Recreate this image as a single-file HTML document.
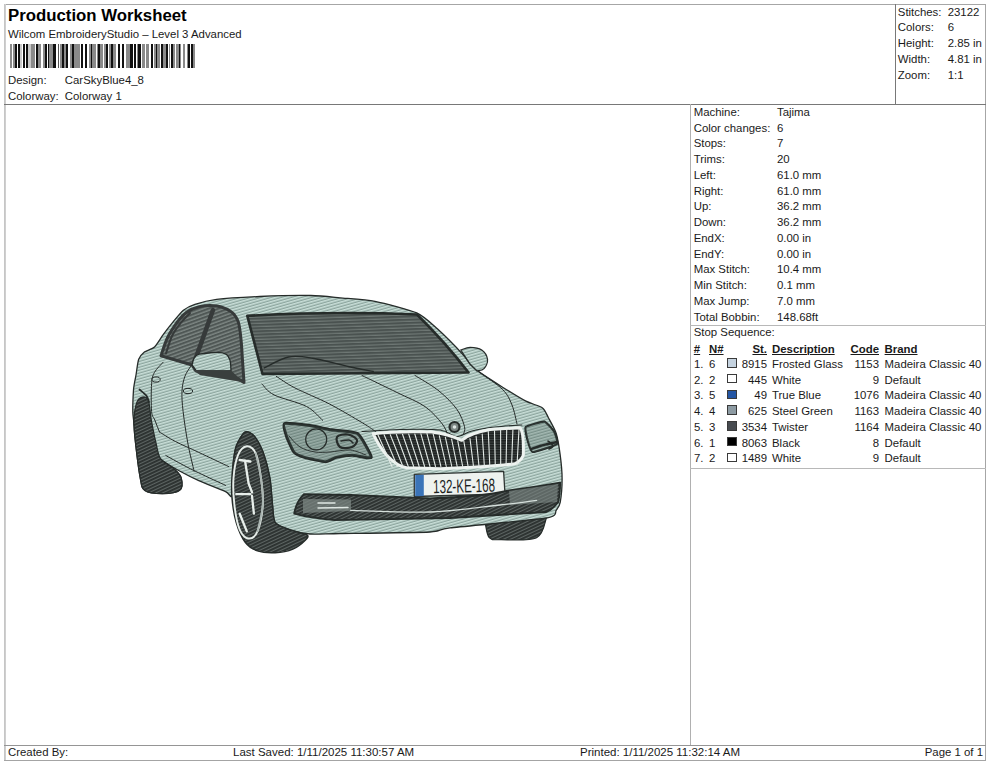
<!DOCTYPE html>
<html><head><meta charset="utf-8"><style>
html,body{margin:0;padding:0;background:#fff;width:990px;height:762px;overflow:hidden;position:relative}
.t{position:absolute;white-space:pre;font-family:"Liberation Sans",sans-serif;font-size:11.4px;line-height:14px;color:#1a1a1a}
.b{font-weight:bold;font-size:16.8px;line-height:22px;color:#000}
.ln{position:absolute}
.sw{position:absolute;width:10px;height:9.5px;box-sizing:border-box;border:1.3px solid #3a3a3a}
</style></head><body>
<div class="ln" style="left:4px;top:4px;width:982px;height:1px;background:#a6a6a6"></div><div class="ln" style="left:4px;top:4px;width:1px;height:757px;background:#c6c6c6"></div><div class="ln" style="left:5px;top:4px;width:1px;height:757px;background:#cfcfcf"></div><div class="ln" style="left:985px;top:4px;width:1px;height:757px;background:#a6a6a6"></div><div class="ln" style="left:4px;top:760px;width:982px;height:1px;background:#a4a4a4"></div><div class="ln" style="left:4px;top:104px;width:982px;height:1px;background:#787878"></div><div class="ln" style="left:895px;top:4px;width:1px;height:101px;background:#787878"></div><div class="ln" style="left:690px;top:104px;width:1px;height:642px;background:#b0b0b0"></div><div class="ln" style="left:690px;top:325px;width:296px;height:1px;background:#b8b8b8"></div><div class="ln" style="left:690px;top:468px;width:296px;height:1px;background:#b8b8b8"></div><div class="ln" style="left:4px;top:745px;width:982px;height:1px;background:#959595"></div>
<svg style="position:absolute;left:0;top:0" width="990" height="762" viewBox="0 0 990 762">
<defs>
<pattern id="sage" patternUnits="userSpaceOnUse" width="8" height="2.8" patternTransform="rotate(-16)">
<rect width="8" height="2.8" fill="#cadfd9"/><rect y="1.5" width="8" height="1.3" fill="#8ca59e"/></pattern>
<pattern id="dark" patternUnits="userSpaceOnUse" width="8" height="3.2" patternTransform="rotate(-2)">
<rect width="8" height="3.2" fill="#4a5250"/><rect y="2" width="8" height="1.2" fill="#6e7774"/></pattern>
<pattern id="dark2" patternUnits="userSpaceOnUse" width="8" height="3.4" patternTransform="rotate(-20)">
<rect width="8" height="3.4" fill="#4f5755"/><rect y="2" width="8" height="1.4" fill="#7d8683"/></pattern>
<pattern id="tire" patternUnits="userSpaceOnUse" width="8" height="3" patternTransform="rotate(-25)">
<rect width="8" height="3" fill="#2c3130"/><rect y="1.9" width="8" height="1.1" fill="#5d6563"/></pattern>
<pattern id="grill" patternUnits="userSpaceOnUse" width="8" height="2.5">
<rect width="8" height="2.5" fill="#1e2221"/><rect y="1.6" width="8" height="0.9" fill="#3e4443"/></pattern>
</defs>

<path d="M140.0,398.0 C142.0,397.1 146.1,395.9 148.0,399.5 C149.9,403.1 149.9,412.1 151.2,419.4 C152.5,426.6 154.4,436.4 156.0,443.0 C157.6,449.6 157.8,454.7 160.7,458.9 C163.6,463.1 169.9,465.1 173.3,468.3 C176.7,471.5 180.1,474.1 181.2,477.8 C182.2,481.5 182.8,487.8 179.6,490.4 C176.4,493.0 168.1,493.6 162.3,493.6 C156.5,493.6 148.6,493.0 144.9,490.4 C141.2,487.8 141.8,485.7 140.2,477.8 C138.6,469.9 136.6,452.7 135.5,443.0 C134.4,433.3 133.8,425.7 133.9,419.4 C134.0,413.1 135.0,408.6 136.0,405.0 C137.0,401.4 138.0,398.9 140.0,398.0Z" fill="url(#tire)" stroke="#262c2a" stroke-width="1.2" stroke-linejoin="round" stroke-linecap="round" />
<path d="M485.4,524.0 C486.0,526.3 486.7,535.1 489.3,537.7 C491.9,540.3 493.3,539.7 501.2,539.7 C509.1,539.7 529.1,541.3 536.6,537.7 C544.1,534.1 544.8,521.3 546.4,518.0 L 520,520 Z" fill="url(#tire)" stroke="#262c2a" stroke-width="1.2" stroke-linejoin="round" stroke-linecap="round" />
<path d="M231.8,495.9 C231.0,498.5 229.4,493.5 225.6,491.7 C221.8,489.9 204.1,483.1 198.8,480.7 C193.5,478.3 184.0,473.5 180.0,471.3 C176.0,469.1 167.5,464.1 164.2,461.8 C160.9,459.5 155.1,454.5 152.0,452.0 C148.9,449.5 140.2,444.3 138.0,440.0 C135.8,435.7 133.5,420.8 133.0,415.0 C132.5,409.2 133.2,394.7 133.5,390.0 C133.8,385.3 135.4,378.6 136.0,375.0 C136.6,371.4 137.7,362.0 138.7,359.3 C139.7,356.6 142.6,353.4 144.4,352.0 C146.2,350.6 152.3,349.0 154.5,347.0 C156.7,345.0 161.0,337.7 163.2,334.7 C165.4,331.7 170.9,324.6 173.3,321.7 C175.7,318.8 180.9,312.2 183.4,310.2 C185.9,308.2 191.0,305.7 194.9,304.4 C198.8,303.1 209.0,300.3 216.6,299.4 C224.2,298.5 248.9,297.0 259.9,296.5 C270.9,296.0 301.6,295.3 310.9,295.5 C320.2,295.7 332.5,297.1 340.0,297.8 C347.5,298.5 366.0,299.5 374.9,301.3 C383.8,303.1 409.4,309.7 416.7,312.9 C424.0,316.1 432.2,324.2 437.6,329.1 C443.0,334.0 459.3,350.6 463.1,354.7 C466.9,358.8 468.2,362.0 470.1,364.0 C472.0,366.0 475.6,369.4 479.4,372.1 C483.2,374.8 497.2,383.8 502.6,387.2 C508.0,390.6 521.2,398.8 525.9,401.2 C530.6,403.6 539.9,406.0 542.5,407.9 C545.1,409.8 546.8,414.7 548.4,417.7 C550.0,420.7 554.8,429.0 556.2,433.4 C557.6,437.8 559.5,449.8 560.2,455.1 C560.9,460.4 562.1,473.2 562.1,478.7 C562.1,484.2 560.9,498.6 560.2,502.3 C559.5,506.0 557.8,508.4 556.2,510.2 C554.6,512.0 558.8,515.9 546.4,518.0 C534.0,520.1 463.6,526.3 450.0,527.9 C436.4,529.5 442.8,531.3 430.0,532.0 C417.2,532.7 354.0,533.3 340.0,533.5 C326.0,533.7 315.9,534.5 310.0,534.0 C304.1,533.5 293.5,530.9 289.4,529.6 C285.3,528.3 277.2,525.4 275.2,522.5 C273.2,519.6 273.1,510.0 272.5,504.8 C271.9,499.6 271.0,484.4 269.9,478.2 C268.8,472.0 264.7,456.6 262.8,451.6 C260.9,446.6 256.0,437.9 253.9,435.6 C251.8,433.3 247.1,430.9 245.0,432.1 C242.9,433.3 237.6,442.0 236.2,446.3 C234.8,450.6 233.1,463.5 232.6,469.3 C232.1,475.1 232.6,493.3 231.8,495.9Z" fill="url(#sage)" stroke="#262c2a" stroke-width="1.3" stroke-linejoin="round" stroke-linecap="round" />
<path d="M140.0,398.0 C142.0,397.1 146.1,395.9 148.0,399.5 C149.9,403.1 149.9,412.1 151.2,419.4 C152.5,426.6 154.4,436.4 156.0,443.0 C157.6,449.6 157.8,454.7 160.7,458.9 C163.6,463.1 169.9,465.1 173.3,468.3 C176.7,471.5 180.1,474.1 181.2,477.8 C182.2,481.5 182.8,487.8 179.6,490.4 C176.4,493.0 168.1,493.6 162.3,493.6 C156.5,493.6 148.6,493.0 144.9,490.4 C141.2,487.8 141.8,485.7 140.2,477.8 C138.6,469.9 136.6,452.7 135.5,443.0 C134.4,433.3 133.8,425.7 133.9,419.4 C134.0,413.1 135.0,408.6 136.0,405.0 C137.0,401.4 138.0,398.9 140.0,398.0Z" fill="url(#tire)" stroke="#262c2a" stroke-width="1.2" stroke-linejoin="round" stroke-linecap="round" />
<path d="M139.5,389.5 C140.7,390.6 144.9,393.7 146.5,395.8 C148.1,397.9 148.6,401.0 149.0,402.0" fill="none" stroke="#262c2a" stroke-width="1.8" stroke-linejoin="round" stroke-linecap="round" />
<path d="M247.3,315.8 Q337,311 417,314.5 Q445,342 468.5,372.5 L262.5,374 Q255,345 247.3,315.8Z" fill="url(#dark)" stroke="#262c2a" stroke-width="2.6" stroke-linejoin="round" stroke-linecap="round" />
<path d="M264.2,367.9 C268.2,366.1 280.4,358.6 288.5,357.0 C296.6,355.4 302.6,356.6 312.7,358.2 C322.8,359.8 339.0,364.5 349.1,366.7 C359.2,368.9 369.3,370.7 373.3,371.5" fill="none" stroke="#262c2a" stroke-width="1.4" stroke-linejoin="round" stroke-linecap="round" />
<path d="M161.0,355.7 C162.1,352.7 164.7,343.3 167.5,337.6 C170.3,331.9 174.5,325.9 177.6,321.7 C180.7,317.5 182.7,314.9 186.3,312.4 C189.9,309.9 194.2,307.7 199.3,306.6 C204.4,305.5 211.3,305.1 216.6,305.9 C221.9,306.7 227.4,309.0 231.0,311.6 C234.6,314.2 236.5,316.9 238.2,321.7 C239.9,326.5 240.4,333.8 241.1,340.5 C241.8,347.2 242.1,355.2 242.6,362.2 C243.1,369.2 243.8,379.0 244.0,382.4 L231,375.1 L196,371 L192,365 Z" fill="url(#dark2)" stroke="#363a3a" stroke-width="3.0" stroke-linejoin="round" stroke-linecap="round" />
<path d="M213,310 L194,363" fill="none" stroke="#363a3a" stroke-width="4.5" stroke-linejoin="round" stroke-linecap="round" />
<path d="M166.0,353.5 C167.0,350.6 169.6,341.1 172.0,336.0 C174.4,330.9 177.5,327.0 180.5,323.2 C183.5,319.4 188.4,314.7 190.0,313.0" fill="none" stroke="#363a3a" stroke-width="2.0" stroke-linejoin="round" stroke-linecap="round" />
<path d="M193.5,359.3 C194.5,358.4 194.5,355.3 199.3,354.2 C204.1,353.1 217.4,351.9 222.4,352.8 C227.4,353.7 228.2,356.3 229.6,359.3 C231.0,362.3 230.8,368.9 231.0,370.8 L196.4,370.8 L192,365 Z" fill="url(#sage)" stroke="#262c2a" stroke-width="1.3" stroke-linejoin="round" stroke-linecap="round" />
<path d="M193.0,370.0 L231.0,370.5 L244.0,382.4 L236.0,381.0 L200.0,375.0Z" fill="#3a3f3e" stroke="none" stroke-linejoin="round" stroke-linecap="round" />
<path d="M460.8,350.0 C462.4,349.6 466.6,347.3 470.1,347.3 C473.6,347.3 478.8,348.0 481.7,350.0 C484.6,352.0 487.1,356.2 487.5,359.3 C487.9,362.4 485.8,366.7 484.0,368.6 C482.2,370.6 478.2,370.6 477.0,371.0 L470,364 Z" fill="url(#sage)" stroke="#262c2a" stroke-width="1.3" stroke-linejoin="round" stroke-linecap="round" />
<path d="M276.3,376.3 C279.4,378.2 286.0,383.3 294.9,387.9 C303.8,392.5 318.5,398.3 329.7,404.1 C340.9,409.9 354.4,418.1 362.2,422.7 C369.9,427.3 373.9,430.4 376.2,432.0" fill="none" stroke="#262c2a" stroke-width="1.0" stroke-linejoin="round" stroke-linecap="round" />
<path d="M262.0,384.0 C264.0,385.8 266.6,391.1 274.0,394.9 C281.4,398.6 298.4,402.2 306.5,406.5 C314.6,410.8 320.0,418.1 322.7,420.4" fill="none" stroke="#262c2a" stroke-width="1.0" stroke-linejoin="round" stroke-linecap="round" />
<path d="M362.0,375.5 C367.8,378.3 386.5,387.3 397.0,392.5 C407.5,397.7 417.5,401.4 425.0,406.6 C432.5,411.8 438.2,418.9 442.0,423.6 C445.8,428.3 447.0,433.1 448.0,435.0" fill="none" stroke="#262c2a" stroke-width="1.0" stroke-linejoin="round" stroke-linecap="round" />
<path d="M415.0,375.5 C419.0,378.1 432.0,385.3 439.0,391.0 C446.0,396.7 452.8,403.6 457.0,409.5 C461.2,415.4 463.4,422.4 464.5,426.5 C465.6,430.6 463.7,432.8 463.5,434.0" fill="none" stroke="#262c2a" stroke-width="1.0" stroke-linejoin="round" stroke-linecap="round" />
<path d="M479.4,372.1 C483.3,375.0 497.2,384.0 502.6,389.5 C508.0,395.0 509.6,399.2 512.0,405.0 C514.4,410.8 516.2,420.8 517.0,424.0" fill="none" stroke="#262c2a" stroke-width="1.0" stroke-linejoin="round" stroke-linecap="round" />
<path d="M163.2,362.2 C161.8,363.9 156.4,368.7 154.5,372.3 C152.6,375.9 152.1,377.3 151.6,383.8 C151.1,390.3 151.1,405.5 151.6,411.5 C152.1,417.5 153.5,416.6 154.8,420.0 C156.1,423.4 158.7,430.0 159.5,432.0" fill="none" stroke="#262c2a" stroke-width="1.0" stroke-linejoin="round" stroke-linecap="round" />
<path d="M190.6,366.5 C189.6,368.2 186.2,372.5 184.8,376.6 C183.4,380.7 182.3,385.2 182.0,391.0 C181.7,396.8 182.1,402.8 183.1,411.5 C184.1,420.2 186.0,433.0 187.8,443.0 C189.6,453.0 193.1,466.6 194.1,471.3" fill="none" stroke="#262c2a" stroke-width="1.0" stroke-linejoin="round" stroke-linecap="round" />
<path d="M159.5,432.0 C162.1,433.6 168.6,438.0 175.2,441.4 C181.8,444.8 189.9,448.2 198.8,452.4 C207.7,456.6 223.7,464.2 228.7,466.6" fill="none" stroke="#262c2a" stroke-width="1.0" stroke-linejoin="round" stroke-linecap="round" />
<path d="M165.8,455.5 C168.7,457.1 177.6,462.1 183.1,465.0 C188.6,467.9 191.7,469.5 198.8,472.9 C205.9,476.3 221.1,483.3 225.6,485.4" fill="none" stroke="#262c2a" stroke-width="1.0" stroke-linejoin="round" stroke-linecap="round" />
<ellipse cx="156" cy="379.5" rx="4.2" ry="2.6" fill="none" stroke="#262c2a" stroke-width="1"/>
<ellipse cx="188" cy="391" rx="4.6" ry="2.6" fill="none" stroke="#262c2a" stroke-width="1"/>
<path d="M284.4,423.5 C286.3,422.6 305.9,425.1 309.8,425.6 C313.7,426.1 327.0,429.1 331.0,429.8 C335.0,430.5 354.1,431.3 357.5,433.6 C360.9,435.9 371.7,455.6 371.3,457.4 C370.9,459.2 355.1,455.3 352.2,455.3 C349.3,455.3 338.5,456.9 336.3,457.4 C334.1,457.9 328.3,461.7 325.7,461.7 C323.1,461.7 307.1,458.2 304.5,457.4 C301.9,456.6 295.4,453.9 293.9,452.1 C292.4,450.3 287.3,438.6 286.5,436.2 C285.7,433.8 282.5,424.4 284.4,423.5Z" fill="url(#sage)" stroke="#262c2a" stroke-width="3.0" stroke-linejoin="round" stroke-linecap="round" />
<path d="M284.4,423.5 C286.3,422.6 305.9,425.1 309.8,425.6 C313.7,426.1 327.0,429.1 331.0,429.8 C335.0,430.5 354.1,431.3 357.5,433.6 C360.9,435.9 371.7,455.6 371.3,457.4 C370.9,459.2 355.1,455.3 352.2,455.3 C349.3,455.3 338.5,456.9 336.3,457.4 C334.1,457.9 328.3,461.7 325.7,461.7 C323.1,461.7 307.1,458.2 304.5,457.4 C301.9,456.6 295.4,453.9 293.9,452.1 C292.4,450.3 287.3,438.6 286.5,436.2 C285.7,433.8 282.5,424.4 284.4,423.5Z" fill="#3f504a" stroke="none" stroke-linejoin="round" stroke-linecap="round" fill-opacity="0.35"/>
<path d="M289.0,436.0 C290.8,437.8 295.7,444.3 300.0,447.0 C304.3,449.7 310.0,451.2 315.0,452.0 C320.0,452.8 324.2,452.3 330.0,452.0 C335.8,451.7 344.0,449.5 350.0,450.0 C356.0,450.5 363.3,454.2 366.0,455.0" fill="none" stroke="#262c2a" stroke-width="0.9" stroke-linejoin="round" stroke-linecap="round" />
<circle cx="316.2" cy="439.4" r="10.5" fill="none" stroke="#262c2a" stroke-width="1.2"/>
<path d="M337.0,437.0 C338.3,434.9 344.7,434.0 348.0,434.5 C351.3,435.0 356.3,437.9 357.0,440.0 C357.7,442.1 354.8,445.8 352.0,447.0 C349.2,448.2 342.5,448.7 340.0,447.0 C337.5,445.3 335.7,439.1 337.0,437.0Z" fill="none" stroke="#262c2a" stroke-width="2.2" stroke-linejoin="round" stroke-linecap="round" />
<path d="M341.0,441.0 C342.3,440.8 347.0,439.7 349.0,440.0 C351.0,440.3 352.3,442.5 353.0,443.0" fill="none" stroke="#262c2a" stroke-width="1.6" stroke-linejoin="round" stroke-linecap="round" />
<path d="M525.7,427.0 C526.8,425.8 542.5,421.3 544.4,421.6 C546.3,421.9 553.5,430.5 554.3,432.0 C555.1,433.5 558.4,442.7 557.0,444.0 C555.6,445.3 534.6,452.3 532.6,452.0 C530.6,451.7 528.0,441.7 527.5,440.0 C527.0,438.3 524.6,428.2 525.7,427.0Z" fill="url(#sage)" stroke="#262c2a" stroke-width="2.2" stroke-linejoin="round" stroke-linecap="round" />
<path d="M525.7,427.0 C526.8,425.8 542.5,421.3 544.4,421.6 C546.3,421.9 553.5,430.5 554.3,432.0 C555.1,433.5 558.4,442.7 557.0,444.0 C555.6,445.3 534.6,452.3 532.6,452.0 C530.6,451.7 528.0,441.7 527.5,440.0 C527.0,438.3 524.6,428.2 525.7,427.0Z" fill="#4d5f58" stroke="none" stroke-linejoin="round" stroke-linecap="round" fill-opacity="0.3"/>
<path d="M531.0,449.0 C532.5,448.5 537.2,446.8 540.0,446.0 C542.8,445.2 545.2,444.7 548.0,444.0 C550.8,443.3 555.5,442.3 557.0,442.0" fill="none" stroke="#262c2a" stroke-width="2.4" stroke-linejoin="round" stroke-linecap="round" />
<path d="M548.0,441.0 C548.8,441.8 552.8,444.7 553.0,446.0 C553.2,447.3 549.7,448.5 549.0,449.0" fill="none" stroke="#262c2a" stroke-width="1.6" stroke-linejoin="round" stroke-linecap="round" />
<circle cx="454.5" cy="427" r="5" fill="#7d8784" stroke="#262c2a" stroke-width="2.2"/><circle cx="454.5" cy="427" r="1.8" fill="#dfe6e3"/>
<path d="M362.0,431.5 C368.3,431.2 387.0,429.8 400.0,429.5 C413.0,429.2 430.7,428.8 440.0,430.0 C449.3,431.2 450.7,436.3 456.0,436.5 C461.3,436.7 465.5,432.6 472.0,431.0 C478.5,429.4 486.7,428.0 495.0,427.0 C503.3,426.0 517.5,425.3 522.0,425.0" fill="none" stroke="#262c2a" stroke-width="1.1" stroke-linejoin="round" stroke-linecap="round" />
<path d="M373.3,433.7 Q398,431 431.7,432 Q448,434 461.7,440.3 Q470,433 490,429.5 L520,427.8 Q524,432 523.3,455.3 Q521,461 515,463.7 Q490,467 440,468.7 L406.7,467.8 Q398,467 386.7,455.3 Q378,445 373.3,433.7Z" fill="url(#grill)" stroke="#eef3f0" stroke-width="3.0" stroke-linejoin="round" stroke-linecap="round" />
<path d="M378.0,435.0 L392.0,466.5 M384.1,434.8 L397.4,466.5 M390.3,434.7 L402.9,466.5 M396.4,434.5 L408.3,466.5 M402.5,434.3 L413.7,466.5 M408.7,434.1 L419.2,466.5 M414.8,434.0 L424.6,466.5 M420.9,433.8 L430.0,466.5 M427.0,433.6 L435.5,466.5 M433.2,434.1 L440.9,466.5 M439.3,435.7 L446.3,466.5 M445.4,437.4 L451.8,466.5 M451.6,439.1 L457.2,466.5 M457.7,440.7 L462.7,466.5 M463.8,441.0 L468.1,466.5 M470.0,438.6 L473.5,466.5 M476.1,436.3 L479.0,466.5 M482.2,434.0 L484.4,466.5 M488.3,431.6 L489.8,466.5 M494.5,430.7 L495.3,466.5 M500.6,430.4 L500.7,465.0 M506.7,430.1 L506.1,465.0 M512.9,429.7 L511.6,465.0 M519.0,429.4 L517.0,465.0" fill="none" stroke="#e3eae6" stroke-width="1.1" stroke-linejoin="round" stroke-linecap="round" />
<path d="M414.3,474.4 L503.6,471.3 L505.0,494.0 L414.3,496.5Z" fill="#eef2ef" stroke="#2f3533" stroke-width="1.3" stroke-linejoin="round" stroke-linecap="round" />
<path d="M415.2,475.0 L423.8,474.7 L423.8,496.0 L415.2,496.2Z" fill="#3a74b8" stroke="none" stroke-linejoin="round" stroke-linecap="round" />
<text x="433" y="492.5" font-family="Liberation Sans" font-size="19" fill="#1b1f1e" transform="rotate(-1.6 464 485)" textLength="62" lengthAdjust="spacingAndGlyphs">132-KE-168</text>
<path d="M294.2,513.6 Q296,502 303.9,494.2 L350.8,495 L430,498.3 Q480,497 509,490.5 Q540,486 560.2,482.6 Q560,495 558.2,502.3 Q552,510 546.4,512 L450,518 L334.6,520.1 Q310,518 294.2,513.6Z" fill="url(#tire)" stroke="#262c2a" stroke-width="1.8" stroke-linejoin="round" stroke-linecap="round" />
<path d="M303.0,499.0 L351.0,499.5 L351.0,511.0 L303.0,513.0Z" fill="#7b8582" stroke="none" stroke-linejoin="round" stroke-linecap="round" opacity="0.75"/>
<path d="M318,503 L335,503 M318,508 L348,507.5" fill="none" stroke="#dfe7e3" stroke-width="1.4" stroke-linejoin="round" stroke-linecap="round" />
<path d="M509.0,491.0 L558.0,484.0 L557.0,502.0 L510.0,505.0Z" fill="#7f8a87" stroke="none" stroke-linejoin="round" stroke-linecap="round" opacity="0.6"/>
<path d="M350.8,510.4 C364.0,510.7 405.1,512.9 430.0,512.0 C454.9,511.1 482.2,506.9 500.0,505.0 C517.8,503.1 530.5,501.1 536.6,500.3" fill="none" stroke="#d5dfdb" stroke-width="1.3" stroke-linejoin="round" stroke-linecap="round" />
<path d="M245.0,432.1 C247.4,430.7 251.5,433.0 253.9,435.6 C256.3,438.2 260.7,445.9 262.8,451.6 C264.9,457.3 268.6,471.1 269.9,478.2 C271.2,485.3 271.8,498.9 272.5,504.8 C273.2,510.7 272.9,519.2 275.2,522.5 C277.5,525.8 285.1,527.9 289.4,529.6 C293.7,531.3 305.0,533.5 307.1,534.9 C309.2,536.3 307.2,538.3 305.3,540.2 C303.4,542.1 296.9,547.4 292.9,549.1 C288.9,550.8 279.9,552.5 275.2,552.7 C270.5,552.9 261.5,552.3 257.5,550.9 C253.5,549.5 247.8,545.8 245.0,542.0 C242.2,538.2 238.0,528.6 236.2,522.5 C234.4,516.4 232.3,503.0 231.8,495.9 C231.3,488.8 232.0,475.9 232.6,469.3 C233.2,462.7 234.5,451.3 236.2,446.3 C237.9,441.3 242.6,433.5 245.0,432.1Z" fill="url(#tire)" stroke="#262c2a" stroke-width="1.4" stroke-linejoin="round" stroke-linecap="round" />
<path d="M246.8,446.3 C249.8,446.0 253.3,448.1 255.7,453.4 C258.1,458.7 259.8,469.6 261.0,478.2 C262.2,486.8 263.4,495.9 262.8,504.8 C262.2,513.7 259.9,525.8 257.5,531.4 C255.1,537.0 251.6,538.8 248.6,538.5 C245.6,538.2 242.1,535.2 239.7,529.6 C237.3,524.0 235.4,513.4 234.4,504.8 C233.4,496.2 232.9,486.5 233.5,478.2 C234.1,469.9 235.8,460.4 238.0,455.1 C240.2,449.8 243.9,446.6 246.8,446.3Z" fill="url(#tire)" stroke="#e6ede9" stroke-width="1.9" stroke-linejoin="round" stroke-linecap="round" />
<path d="M239.7,460 L250.4,461.5 M245,460.5 L248.6,483.5 L252.1,492.4 M236.2,494.1 L250.4,494.1 M252,496 L253.9,513.7 M239.7,513.7 L246.8,531.4" fill="none" stroke="#e8efeb" stroke-width="2.3" stroke-linejoin="round" stroke-linecap="round" />
<path d="M255.7,453.4 C256.6,457.5 259.8,469.6 261.0,478.2 C262.2,486.8 263.4,495.9 262.8,504.8 C262.2,513.7 258.4,527.0 257.5,531.4" fill="none" stroke="#aab5b1" stroke-width="1.9" stroke-linejoin="round" stroke-linecap="round" />
</svg>
<div class="t b" style="left:8px;top:5px">Production Worksheet</div><div class="t" style="left:8px;top:27.30px;">Wilcom EmbroideryStudio – Level 3 Advanced</div><svg style="position:absolute;left:0;top:44px" width="200" height="24"><rect x="10" y="0" width="2" height="24" fill="#8a8a8a"/><rect x="13" y="0" width="2" height="24" fill="#8a8a8a"/><rect x="15" y="0" width="2" height="24" fill="#111"/><rect x="18" y="0" width="2" height="24" fill="#111"/><rect x="20" y="0" width="2" height="24" fill="#c8c8c8"/><rect x="23" y="0" width="2" height="24" fill="#111"/><rect x="26" y="0" width="2" height="24" fill="#111"/><rect x="28" y="0" width="3" height="24" fill="#c8c8c8"/><rect x="31" y="0" width="4" height="24" fill="#8a8a8a"/><rect x="36" y="0" width="2" height="24" fill="#111"/><rect x="38" y="0" width="3" height="24" fill="#8a8a8a"/><rect x="43" y="0" width="2" height="24" fill="#8a8a8a"/><rect x="45" y="0" width="2" height="24" fill="#111"/><rect x="48" y="0" width="1" height="24" fill="#111"/><rect x="49" y="0" width="4" height="24" fill="#8a8a8a"/><rect x="53" y="0" width="3" height="24" fill="#111"/><rect x="58" y="0" width="1" height="24" fill="#555"/><rect x="60" y="0" width="2" height="24" fill="#8a8a8a"/><rect x="62" y="0" width="2" height="24" fill="#111"/><rect x="64" y="0" width="2" height="24" fill="#8a8a8a"/><rect x="66" y="0" width="2" height="24" fill="#111"/><rect x="70" y="0" width="2" height="24" fill="#8a8a8a"/><rect x="72" y="0" width="2" height="24" fill="#111"/><rect x="74" y="0" width="6" height="24" fill="#8a8a8a"/><rect x="81" y="0" width="2" height="24" fill="#111"/><rect x="85" y="0" width="2" height="24" fill="#111"/><rect x="89" y="0" width="2" height="24" fill="#8a8a8a"/><rect x="91" y="0" width="1" height="24" fill="#111"/><rect x="92" y="0" width="4" height="24" fill="#8a8a8a"/><rect x="97" y="0" width="1" height="24" fill="#8a8a8a"/><rect x="98" y="0" width="2" height="24" fill="#111"/><rect x="100" y="0" width="3" height="24" fill="#8a8a8a"/><rect x="104" y="0" width="2" height="24" fill="#8a8a8a"/><rect x="106" y="0" width="2" height="24" fill="#111"/><rect x="109" y="0" width="2" height="24" fill="#8a8a8a"/><rect x="111" y="0" width="2" height="24" fill="#111"/><rect x="113" y="0" width="3" height="24" fill="#8a8a8a"/><rect x="118" y="0" width="2" height="24" fill="#111"/><rect x="122" y="0" width="2" height="24" fill="#111"/><rect x="126" y="0" width="4" height="24" fill="#8a8a8a"/><rect x="130" y="0" width="3" height="24" fill="#111"/><rect x="134" y="0" width="2" height="24" fill="#111"/><rect x="137" y="0" width="1" height="24" fill="#8a8a8a"/><rect x="138" y="0" width="3" height="24" fill="#111"/><rect x="142" y="0" width="3" height="24" fill="#8a8a8a"/><rect x="146" y="0" width="3" height="24" fill="#8a8a8a"/><rect x="151" y="0" width="2" height="24" fill="#111"/><rect x="154" y="0" width="2" height="24" fill="#8a8a8a"/><rect x="156" y="0" width="1" height="24" fill="#111"/><rect x="157" y="0" width="3" height="24" fill="#8a8a8a"/><rect x="161" y="0" width="2" height="24" fill="#111"/><rect x="163" y="0" width="3" height="24" fill="#8a8a8a"/><rect x="166" y="0" width="2" height="24" fill="#111"/><rect x="169" y="0" width="1" height="24" fill="#8a8a8a"/><rect x="171" y="0" width="2" height="24" fill="#111"/><rect x="173" y="0" width="2" height="24" fill="#8a8a8a"/><rect x="176" y="0" width="3" height="24" fill="#8a8a8a"/><rect x="179" y="0" width="1" height="24" fill="#111"/><rect x="180" y="0" width="1" height="24" fill="#8a8a8a"/><rect x="183" y="0" width="2" height="24" fill="#8a8a8a"/><rect x="187" y="0" width="1" height="24" fill="#8a8a8a"/><rect x="188" y="0" width="2" height="24" fill="#111"/><rect x="191" y="0" width="2" height="24" fill="#111"/><rect x="193" y="0" width="2" height="24" fill="#8a8a8a"/></svg><div class="t" style="left:8px;top:72.90px;">Design:</div><div class="t" style="left:64.8px;top:72.90px;">CarSkyBlue4_8</div><div class="t" style="left:8px;top:88.50px;">Colorway:</div><div class="t" style="left:64.8px;top:88.50px;">Colorway 1</div><div class="t" style="left:897.8px;top:4.60px;">Stitches:</div><div class="t" style="left:947.7px;top:4.60px;">23122</div><div class="t" style="left:897.8px;top:20.45px;">Colors:</div><div class="t" style="left:947.7px;top:20.45px;">6</div><div class="t" style="left:897.8px;top:36.30px;">Height:</div><div class="t" style="left:947.7px;top:36.30px;">2.85 in</div><div class="t" style="left:897.8px;top:52.15px;">Width:</div><div class="t" style="left:947.7px;top:52.15px;">4.81 in</div><div class="t" style="left:897.8px;top:68.00px;">Zoom:</div><div class="t" style="left:947.7px;top:68.00px;">1:1</div><div class="t" style="left:693.7px;top:104.90px;">Machine:</div><div class="t" style="left:777px;top:104.90px;">Tajima</div><div class="t" style="left:693.7px;top:120.65px;">Color changes:</div><div class="t" style="left:777px;top:120.65px;">6</div><div class="t" style="left:693.7px;top:136.40px;">Stops:</div><div class="t" style="left:777px;top:136.40px;">7</div><div class="t" style="left:693.7px;top:152.15px;">Trims:</div><div class="t" style="left:777px;top:152.15px;">20</div><div class="t" style="left:693.7px;top:167.90px;">Left:</div><div class="t" style="left:777px;top:167.90px;">61.0 mm</div><div class="t" style="left:693.7px;top:183.65px;">Right:</div><div class="t" style="left:777px;top:183.65px;">61.0 mm</div><div class="t" style="left:693.7px;top:199.40px;">Up:</div><div class="t" style="left:777px;top:199.40px;">36.2 mm</div><div class="t" style="left:693.7px;top:215.15px;">Down:</div><div class="t" style="left:777px;top:215.15px;">36.2 mm</div><div class="t" style="left:693.7px;top:230.90px;">EndX:</div><div class="t" style="left:777px;top:230.90px;">0.00 in</div><div class="t" style="left:693.7px;top:246.65px;">EndY:</div><div class="t" style="left:777px;top:246.65px;">0.00 in</div><div class="t" style="left:693.7px;top:262.40px;">Max Stitch:</div><div class="t" style="left:777px;top:262.40px;">10.4 mm</div><div class="t" style="left:693.7px;top:278.15px;">Min Stitch:</div><div class="t" style="left:777px;top:278.15px;">0.1 mm</div><div class="t" style="left:693.7px;top:293.90px;">Max Jump:</div><div class="t" style="left:777px;top:293.90px;">7.0 mm</div><div class="t" style="left:693.7px;top:309.65px;">Total Bobbin:</div><div class="t" style="left:777px;top:309.65px;">148.68ft</div><div class="t" style="left:693.7px;top:325.40px;">Stop Sequence:</div><div class="t" style="left:693.8px;top:341.85px;text-decoration:underline;text-decoration-thickness:1.4px;font-weight:bold">#</div><div class="t" style="left:709px;top:341.85px;text-decoration:underline;text-decoration-thickness:1.4px;font-weight:bold">N#</div><div class="t" style="right:223px;top:341.85px;text-decoration:underline;text-decoration-thickness:1.4px;font-weight:bold">St.</div><div class="t" style="left:772px;top:341.85px;text-decoration:underline;text-decoration-thickness:1.4px;font-weight:bold">Description</div><div class="t" style="right:111px;top:341.85px;text-decoration:underline;text-decoration-thickness:1.4px;font-weight:bold">Code</div><div class="t" style="left:884.6px;top:341.85px;text-decoration:underline;text-decoration-thickness:1.4px;font-weight:bold">Brand</div><div class="t" style="left:693.9px;top:356.90px;">1.</div><div class="t" style="left:709px;top:356.90px;">6</div><div class="sw" style="left:727px;top:358.2px;background:#c5d3e0"></div><div class="t" style="right:223px;top:356.90px;">8915</div><div class="t" style="left:772px;top:356.90px;">Frosted Glass</div><div class="t" style="right:111px;top:356.90px;">1153</div><div class="t" style="left:884.6px;top:356.90px;">Madeira Classic 40</div><div class="t" style="left:693.9px;top:372.65px;">2.</div><div class="t" style="left:709px;top:372.65px;">2</div><div class="sw" style="left:727px;top:373.9px;background:#ffffff"></div><div class="t" style="right:223px;top:372.65px;">445</div><div class="t" style="left:772px;top:372.65px;">White</div><div class="t" style="right:111px;top:372.65px;">9</div><div class="t" style="left:884.6px;top:372.65px;">Default</div><div class="t" style="left:693.9px;top:388.40px;">3.</div><div class="t" style="left:709px;top:388.40px;">5</div><div class="sw" style="left:727px;top:389.7px;background:#2456a4"></div><div class="t" style="right:223px;top:388.40px;">49</div><div class="t" style="left:772px;top:388.40px;">True Blue</div><div class="t" style="right:111px;top:388.40px;">1076</div><div class="t" style="left:884.6px;top:388.40px;">Madeira Classic 40</div><div class="t" style="left:693.9px;top:404.15px;">4.</div><div class="t" style="left:709px;top:404.15px;">4</div><div class="sw" style="left:727px;top:405.4px;background:#8d9ba3"></div><div class="t" style="right:223px;top:404.15px;">625</div><div class="t" style="left:772px;top:404.15px;">Steel Green</div><div class="t" style="right:111px;top:404.15px;">1163</div><div class="t" style="left:884.6px;top:404.15px;">Madeira Classic 40</div><div class="t" style="left:693.9px;top:419.90px;">5.</div><div class="t" style="left:709px;top:419.90px;">3</div><div class="sw" style="left:727px;top:421.2px;background:#474b50"></div><div class="t" style="right:223px;top:419.90px;">3534</div><div class="t" style="left:772px;top:419.90px;">Twister</div><div class="t" style="right:111px;top:419.90px;">1164</div><div class="t" style="left:884.6px;top:419.90px;">Madeira Classic 40</div><div class="t" style="left:693.9px;top:435.65px;">6.</div><div class="t" style="left:709px;top:435.65px;">1</div><div class="sw" style="left:727px;top:436.9px;background:#000000"></div><div class="t" style="right:223px;top:435.65px;">8063</div><div class="t" style="left:772px;top:435.65px;">Black</div><div class="t" style="right:111px;top:435.65px;">8</div><div class="t" style="left:884.6px;top:435.65px;">Default</div><div class="t" style="left:693.9px;top:451.40px;">7.</div><div class="t" style="left:709px;top:451.40px;">2</div><div class="sw" style="left:727px;top:452.7px;background:#ffffff"></div><div class="t" style="right:223px;top:451.40px;">1489</div><div class="t" style="left:772px;top:451.40px;">White</div><div class="t" style="right:111px;top:451.40px;">9</div><div class="t" style="left:884.6px;top:451.40px;">Default</div><div class="t" style="left:8px;top:744.60px;">Created By:</div><div class="t" style="left:233px;top:744.60px;font-size:11.5px">Last Saved: 1/11/2025 11:30:57 AM</div><div class="t" style="left:580px;top:744.60px;font-size:11.5px">Printed: 1/11/2025 11:32:14 AM</div><div class="t" style="right:7px;top:744.60px;">Page 1 of 1</div>
</body></html>
